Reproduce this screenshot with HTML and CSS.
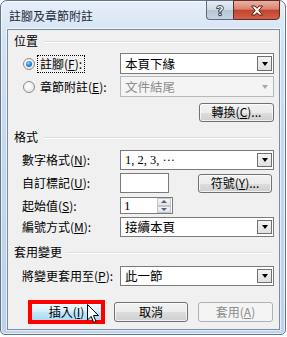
FILE: index.html
```html
<!DOCTYPE html>
<html lang="zh-Hant">
<head>
  <meta charset="UTF-8">
  <title>註腳及章節附註</title>
  <link rel="stylesheet" href="styles.css">
</head>
<body>
  <div class="window">
    <div class="titlebar">
      <span class="title">註腳及章節附註</span>
      <div class="caption-btns">
        <span class="cap help">
          <svg width="12" height="13" viewBox="0 0 12 13"><path d="M2.5 4.5 Q2.5 1.5 6 1.5 Q9.5 1.5 9.5 4.3 Q9.5 6 7.3 6.8 L7.3 8.2 L4.8 8.2 L4.8 6 Q7 5.3 7 4.3 Q7 3.6 6 3.6 Q5 3.6 5 4.6 Z M4.8 9.3 H7.3 V11.6 H4.8 Z" fill="#fff" stroke="#33404f" stroke-width="1"/></svg>
        </span>
        <span class="cap close">
          <svg width="14" height="11" viewBox="0 0 14 11"><path d="M1.5 1 H5 L7 3.3 L9 1 H12.5 L8.8 5.5 L12.5 10 H9 L7 7.7 L5 10 H1.5 L5.2 5.5 Z" fill="#fff" stroke="#5a1f16" stroke-width="1"/></svg>
        </span>
      </div>
    </div>

    <div class="client">
      <div class="group-head h1"><span>位置</span><i></i></div>

      <div class="row r-first">
        <label class="radio-label"><span class="radio checked"></span><span class="focus">註腳(<u>F</u>):</span></label>
        <div class="combo"><span class="val">本頁下緣</span><span class="drop"></span></div>
      </div>
      <div class="row r-second">
        <label class="radio-label"><span class="radio"></span><span class="plain">章節附註(<u>E</u>):</span></label>
        <div class="combo disabled"><span class="val">文件結尾</span><span class="drop"></span></div>
      </div>
      <div class="row r-convert">
        <button class="btn convert">轉換(<u>C</u>)...</button>
      </div>

      <div class="group-head h2"><span>格式</span><i></i></div>

      <div class="row r-num">
        <span class="label">數字格式(<u>N</u>):</span>
        <div class="combo"><span class="val serif">1, 2, 3, ···</span><span class="drop"></span></div>
      </div>
      <div class="row r-mark">
        <span class="label">自訂標記(<u>U</u>):</span>
        <div class="textbox mark"></div>
        <button class="btn symbol">符號(<u>Y</u>)...</button>
      </div>
      <div class="row r-start">
        <span class="label">起始值(<u>S</u>):</span>
        <div class="textbox spin">
          <span class="val serif">1</span>
          <span class="spin-btns"><span class="up"></span><span class="down"></span></span>
        </div>
      </div>
      <div class="row r-mode">
        <span class="label">編號方式(<u>M</u>):</span>
        <div class="combo"><span class="val">接續本頁</span><span class="drop"></span></div>
      </div>

      <div class="group-head h3"><span>套用變更</span><i></i></div>

      <div class="row r-apply">
        <span class="label">將變更套用至(<u>P</u>):</span>
        <div class="combo"><span class="val">此一節</span><span class="drop"></span></div>
      </div>

      <div class="buttons">
        <div class="highlight"><button class="btn hot">插入(<u>I</u>)</button></div>
        <button class="btn cancel">取消</button>
        <button class="btn apply" disabled>套用(<u>A</u>)</button>
      </div>
    </div>

    <svg class="cursor" width="13" height="20" viewBox="0 0 13 20"><path d="M0.5 0.5 V16 L4.2 12.4 L6.7 18.5 L9 17.5 L6.5 11.5 H11.5 Z" fill="#fff" stroke="#000" stroke-width="1"/></svg>
  </div>
</body>
</html>
```

FILE: styles.css
```css
body {
  margin: 0;
  background: #fff;
  font-family: "Noto Sans CJK TC", "Noto Sans CJK JP", sans-serif;
  font-size: 12px;
  color: #000;
}
.window {
  position: relative;
  box-sizing: border-box;
  width: 286px;
  height: 335px;
  padding: 0 5px 4px 6px;
  border: 1px solid #63758b;
  border-radius: 7px 7px 5px 5px;
  background: linear-gradient(to bottom, #e6eef8 0%, #d3e2f2 12%, #c4d8ee 45%, #bcd2ea 100%);
  box-shadow: inset 0 0 0 1px rgba(255,255,255,0.65);
}
.titlebar {
  display: flex;
  height: 28px;
}
.title {
  padding: 7px 0 0 2px;
  line-height: 16px;
  font-size: 12px;
  color: #1e2a38;
}
.caption-btns {
  display: flex;
  margin-left: auto;
  margin-top: -1px;
  height: 20px;
}
.cap {
  box-sizing: border-box;
  display: flex;
  align-items: center;
  justify-content: center;
  height: 20px;
}
.cap.help {
  width: 27px;
  border: 1px solid #5d6c7e;
  border-right: none;
  border-radius: 0 0 0 4px;
  background: linear-gradient(to bottom, #e5ecf3 0%, #cfdae6 48%, #b7c6d6 52%, #c5d4e3 100%);
}
.cap.close {
  width: 47px;
  border: 1px solid #5e2a22;
  border-radius: 0 0 4px 0;
  background: linear-gradient(to bottom, #eab1a4 0%, #d88371 45%, #c4432d 52%, #d2604a 100%);
}
.client {
  box-sizing: border-box;
  height: 301px;
  display: flex;
  flex-direction: column;
  background: #f0f0f0;
  border: 1px solid #7a8ca2;
  box-shadow: 0 0 0 1px rgba(255,255,255,0.6);
}
.group-head {
  display: flex;
  align-items: center;
  height: 16px;
  padding: 0 6px 0 6px;
  line-height: 16px;
}
.group-head i {
  flex: 1;
  margin: 2px 0 0 6px;
  border-top: 1px solid #d5dfe5;
  border-bottom: 1px solid #fff;
}
.h1 { margin-top: 3px; }
.h2 { margin-top: 7px; }
.h3 { margin-top: 7px; }
.row {
  display: flex;
  align-items: center;
  padding: 0 5px 0 14px;
}
.r-first { height: 21px; margin-top: 4px; }
.r-second { height: 21px; margin-top: 2px; }
.r-convert { height: 20px; margin-top: 5px; justify-content: flex-end; }
.r-num { height: 20px; margin-top: 5px; }
.r-mark { height: 20px; margin-top: 3px; }
.r-start { height: 17px; margin-top: 4px; }
.r-mode { height: 20px; margin-top: 3px; }
.r-apply { height: 20px; margin-top: 6px; }
.label,
.radio-label {
  width: 98px;
  flex: none;
  line-height: 14px;
  white-space: nowrap;
}
.radio-label {
  display: flex;
  align-items: center;
}
.radio {
  box-sizing: border-box;
  width: 12px;
  height: 12px;
  margin: 1px 4px 0 1px;
  border: 1px solid #8a8a8a;
  border-radius: 50%;
  background: radial-gradient(circle at 40% 40%, #fff 0%, #f0f0f0 50%, #d6d6d6 100%);
  display: flex;
  align-items: center;
  justify-content: center;
}
.radio.checked::after {
  content: "";
  width: 6px;
  height: 6px;
  border-radius: 50%;
  background: radial-gradient(circle at 40% 35%, #9fd8ff 0%, #2a8ad8 45%, #0b4f94 100%);
}
.focus {
  padding: 0 1px;
  outline: 1px dotted #000;
  outline-offset: 1px;
}
.plain { padding: 0 1px; }
.combo {
  box-sizing: border-box;
  flex: 1;
  height: 100%;
  display: flex;
  align-items: center;
  background: #fff;
  border: 1px solid #7a7a7a;
  padding: 0 1px 0 4px;
}
.combo .val {
  flex: 1;
  font-size: 12.5px;
  line-height: 14px;
}
.serif {
  font-family: "Liberation Serif", serif;
  font-size: 13px;
}
.combo .drop {
  box-sizing: border-box;
  width: 15px;
  height: calc(100% - 4px);
  border: 1px solid #707070;
  background: linear-gradient(to bottom, #f4f4f4, #e0e0e0);
  display: flex;
  align-items: center;
  justify-content: center;
}
.combo .drop::after {
  content: "";
  border-left: 3.5px solid transparent;
  border-right: 3.5px solid transparent;
  border-top: 4px solid #000;
}
.combo.disabled {
  border-color: #b4b9bd;
  background: #f4f4f4;
}
.combo.disabled .val { color: #8d8d8d; }
.combo.disabled .drop {
  border-color: transparent;
  background: none;
}
.combo.disabled .drop::after { border-top-color: #a8a8a8; }
.textbox {
  box-sizing: border-box;
  height: 100%;
  background: #fff;
  border: 1px solid #7a7a7a;
}
.textbox.mark { width: 49px; }
.textbox.spin {
  width: 53px;
  display: flex;
  align-items: center;
  padding-left: 3px;
}
.spin .val { flex: 1; line-height: 14px; }
.spin-btns {
  display: flex;
  flex-direction: column;
  width: 14px;
  height: 100%;
  margin-right: 1px;
}
.spin-btns span {
  flex: 1;
  display: flex;
  align-items: center;
  justify-content: center;
  background: linear-gradient(to bottom, #f6f6f6, #e4e4e4);
  border: 1px solid #c2c6ca;
}
.spin-btns .up::after {
  content: "";
  border-left: 3px solid transparent;
  border-right: 3px solid transparent;
  border-bottom: 3px solid #4d6185;
}
.spin-btns .down::after {
  content: "";
  border-left: 3px solid transparent;
  border-right: 3px solid transparent;
  border-top: 3px solid #4d6185;
}
.btn {
  box-sizing: border-box;
  height: 19px;
  padding: 0;
  font-family: inherit;
  font-size: 12px;
  line-height: 14px;
  color: #000;
  border: 1px solid #707070;
  border-radius: 3px;
  background: linear-gradient(to bottom, #f2f2f2 0%, #ebebeb 50%, #dddddd 51%, #cfcfcf 100%);
  box-shadow: inset 0 0 0 1px rgba(255,255,255,0.7);
}
.btn.convert { width: 75px; }
.btn.symbol { width: 74px; margin-left: auto; margin-right: 2px; }
.buttons {
  display: flex;
  align-items: center;
  height: 24px;
  margin-top: 14px;
  padding-left: 20px;
}
.highlight {
  box-sizing: border-box;
  width: 77px;
  height: 24px;
  border: 4px solid #ff0000;
  display: flex;
}
.btn.hot {
  flex: 1;
  height: 100%;
  border: none;
  border-radius: 0;
  background: linear-gradient(to bottom, #eef8fe 0%, #dcf1fc 45%, #c2e7fc 50%, #a9dbf6 100%);
  box-shadow: inset 0 1px 0 #fff;
}
.btn.cancel { width: 74px; height: 20px; margin-left: 9px; }
.btn.apply {
  width: 75px;
  height: 20px;
  margin-left: 10px;
  color: #8b8b8b;
  border-color: #adb2b5;
  background: #f4f4f4;
  box-shadow: none;
}
.cursor {
  position: absolute;
  left: 86px;
  top: 303px;
}
```
